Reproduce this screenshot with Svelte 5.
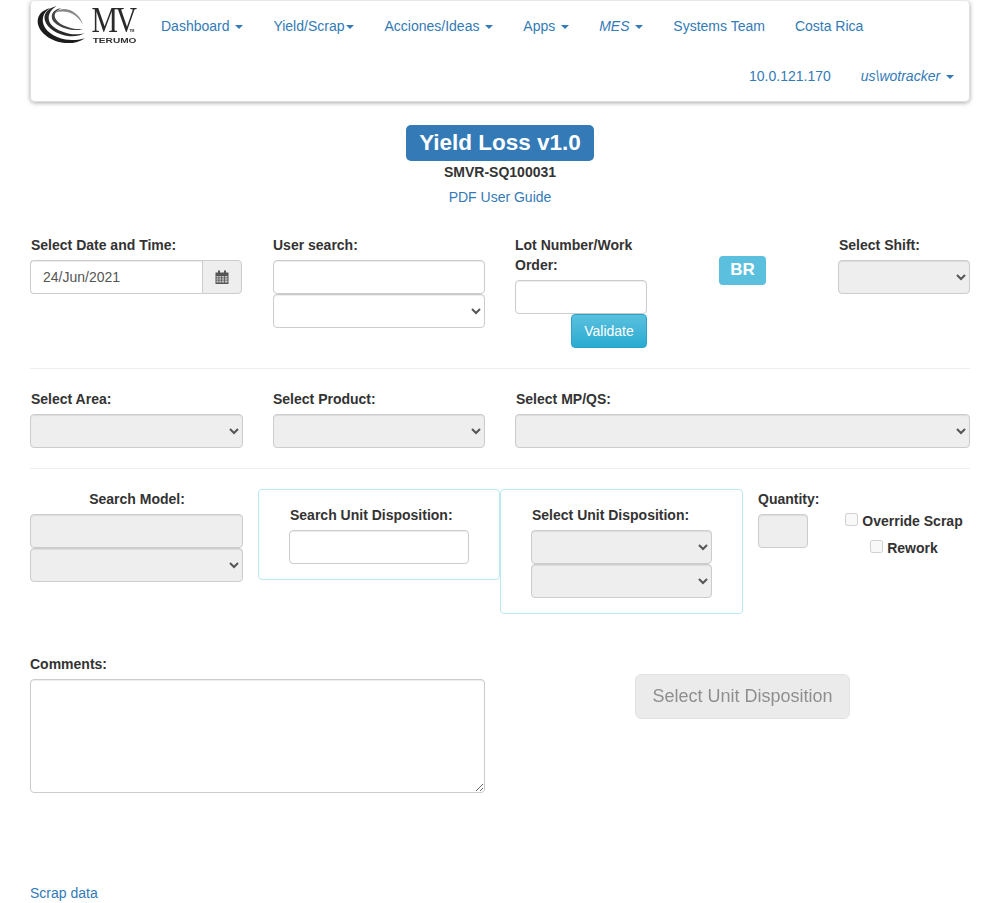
<script>
  const navLeft = [
    { label: 'Dashboard', caret: true, gap: true },
    { label: 'Yield/Scrap', caret: true, gap: false },
    { label: 'Acciones/Ideas', caret: true, gap: true },
    { label: 'Apps', caret: true, gap: true },
    { label: 'MES', caret: true, gap: true, italic: true },
    { label: 'Systems Team' },
    { label: 'Costa Rica' }
  ];
</script>

<div class="page">
  <nav class="navbar">
    <a class="brand" href="#top" aria-label="MV Terumo">
      <svg class="swirl" viewBox="0 0 50 40" width="49" height="39" aria-hidden="true">
        <path d="M14 3C4 5-1 12 1 20c2 9 14 18 28 19 8 .5 14-1 20-5-6 2-14 2.500-20 1.500C17 33 7 26 6 18 5 11 8 6 14 3z" fill="#1c1c1c"/>
        <path d="M20 1C11 3 6 9 8 16c2 8 13 15 25 16 6 .5 11-.5 16-3-5 1-11 1.500-16 .5C23 27 13 22 12 15c-1-6 3-11 8-14z" fill="#2a2a2a"/>
        <path d="M25 3c-6 1-10 4-10 9 0 6 8 11 18 13 5 1 9 1 14-.5-5 .5-10 0-14-1.500C25 21 18 16 18 11c0-3 3-6 7-8z" fill="#444"/>
        <path d="M18 8c5-5 13-5 19-1 5 3 8 7 10 13-3-5-7-9-11-11-6-3-12-3-18-1z" fill="#888"/>
      </svg>
      <span class="mark">
        <span class="mv">MV<small>TM</small></span>
        <span class="terumo">TERUMO</span>
      </span>
    </a>
    {#each navLeft as item}
      <a class="navlink" class:italic={item.italic} href="#top">{item.label}{#if item.gap}&nbsp;{/if}{#if item.caret}<span class="caret"></span>{/if}</a>
    {/each}
    <div class="navright">
      <a class="navlink" href="#top">10.0.121.170</a>
      <a class="navlink italic" href="#top">us\wotracker&nbsp;<span class="caret"></span></a>
    </div>
  </nav>

  <header class="heading">
    <span class="title">Yield Loss v1.0</span>
    <strong class="code">SMVR-SQ100031</strong>
    <a href="#top">PDF User Guide</a>
  </header>

  <section class="row first">
    <div class="col date">
      <label for="date">Select Date and Time:</label>
      <div class="group">
        <input id="date" class="ctl" value="24/Jun/2021" />
        <span class="addon">
          <svg viewBox="0 0 14 14" width="14" height="14" aria-hidden="true">
            <path d="M.5 2.500h13V14H.5z" fill="#555"/>
            <path d="M3 .5h2v3H3zM9 .5h2v3H9z" fill="#555"/>
            <path d="M1.500 6h2v1.500h-2zM4.300 6h2v1.500h-2zM7.100 6h2v1.500h-2zM9.900 6h2.600v1.500H9.900zM1.500 8.300h2v1.500h-2zM4.300 8.300h2v1.500h-2zM7.100 8.300h2v1.500h-2zM9.900 8.300h2.600v1.500H9.900zM1.500 10.600h2v1.800h-2zM4.300 10.600h2v1.800h-2zM7.100 10.600h2v1.800h-2zM9.900 10.600h2.600v1.800H9.900z" fill="#c9c9c9"/>
          </svg>
        </span>
      </div>
    </div>
    <div class="col user">
      <label for="user">User search:</label>
      <input id="user" class="ctl" />
      <select class="ctl" aria-label="User"></select>
    </div>
    <div class="col lot">
      <label for="lot">Lot Number/Work Order:</label>
      <input id="lot" class="ctl" />
      <button class="validate">Validate</button>
    </div>
    <div class="col badge-col"><span class="br">BR</span></div>
    <div class="col shift">
      <label for="shift">Select Shift:</label>
      <select id="shift" class="ctl" disabled></select>
    </div>
  </section>

  <hr />

  <section class="row second">
    <div class="col area">
      <label for="area">Select Area:</label>
      <select id="area" class="ctl" disabled></select>
    </div>
    <div class="col product">
      <label for="product">Select Product:</label>
      <select id="product" class="ctl" disabled></select>
    </div>
    <div class="col mp">
      <label for="mp">Select MP/QS:</label>
      <select id="mp" class="ctl" disabled></select>
    </div>
  </section>

  <hr class="rule-b" />

  <section class="row third">
    <div class="col model">
      <label for="model">Search Model:</label>
      <input id="model" class="ctl" disabled />
      <select class="ctl" disabled aria-label="Model"></select>
    </div>
    <div class="box search-box">
      <label for="disp">Search Unit Disposition:</label>
      <input id="disp" class="ctl" />
    </div>
    <div class="box select-box">
      <label for="seldisp">Select Unit Disposition:</label>
      <select id="seldisp" class="ctl" disabled></select>
      <select class="ctl" disabled aria-label="Disposition detail"></select>
    </div>
    <div class="col qty">
      <label for="qty">Quantity:</label>
      <input id="qty" class="ctl" disabled />
    </div>
    <div class="checks">
      <label class="check"><input type="checkbox" disabled />Override Scrap</label>
      <label class="check"><input type="checkbox" disabled />Rework</label>
    </div>
  </section>

  <section class="row fourth">
    <div class="col comments">
      <label for="comments">Comments:</label>
      <textarea id="comments" class="ctl"></textarea>
    </div>
    <div class="submit-wrap">
      <button class="submit" disabled>Select Unit Disposition</button>
    </div>
  </section>

  <a class="scrap" href="#top">Scrap data</a>
</div>

<style>
  :global(body) {
    margin: 0;
    font-family: "Liberation Sans", Arial, sans-serif;
    font-size: 14px;
    line-height: 20px;
    color: #333;
    background: #fff;
  }
  * { box-sizing: border-box; }
  a { color: #337ab7; text-decoration: none; }
  label { display: block; font-weight: 700; }

  .page { padding: 0 30px; height: 903px; overflow: hidden; }

  .navbar {
    display: flex;
    flex-wrap: wrap;
    min-height: 102px;
    align-content: flex-start;
    border: 1px solid #ddd;
    border-top-color: #e8e8e8;
    border-radius: 5px;
    box-shadow: 0 1px 4px rgba(0, 0, 0, .35);
  }
  .brand { display: flex; width: 115px; height: 50px; padding: 3px 0 0 6px; filter: blur(.3px); }
  .swirl { flex: none; margin-top: 1px; }
  .mark { display: flex; flex-direction: column; align-items: flex-end; width: 50px; color: #333; }
  .mv {
    position: relative;
    margin: 2px 2px 0 0;
    font: 400 35px/30px "Liberation Serif", serif;
    letter-spacing: -3px;
    color: #2a2a2a;
    transform: scaleX(.85);
    transform-origin: right;
  }
  .mv small { position: absolute; right: 0; bottom: 3px; font: 700 4px/4px "Liberation Sans", sans-serif; letter-spacing: 0; }
  .terumo {
    margin-top: 1px;
    font: 700 7.500px/8px "Liberation Sans", sans-serif;
    color: #333;
    transform: scaleX(1.35);
    transform-origin: right;
  }
  .navlink { display: block; padding: 15px; }
  .italic { font-style: italic; }
  .caret {
    display: inline-block;
    width: 0;
    height: 0;
    margin-left: 2px;
    vertical-align: middle;
    border-top: 4px solid;
    border-right: 4px solid transparent;
    border-left: 4px solid transparent;
  }
  .navright { display: flex; margin-left: auto; }

  .heading { display: flex; flex-direction: column; align-items: center; margin-top: 23px; }
  .title {
    padding: 0 13.500px;
    height: 36px;
    font-size: 22.500px;
    line-height: 35px;
    font-weight: 700;
    color: #fff;
    background: #337ab7;
    border-radius: 5px;
  }
  .code { margin-top: 1px; }
  .heading a { margin-top: 5px; }

  .row { display: flex; }
  .col label { padding-left: 1px; }

  .ctl {
    display: block;
    width: 100%;
    height: 34px;
    padding: 6px 12px;
    font: inherit;
    color: #555;
    background: #fff;
    border: 1px solid #ccc;
    border-radius: 4px;
    box-shadow: inset 0 1px 1px rgba(0, 0, 0, .075);
  }
  select.ctl { padding: 6px 8px; }
  .ctl:disabled { background-color: #eee; opacity: 1; }

  .first { margin-top: 28px; height: 133px; }
  .first label { margin-bottom: 5px; }
  .date { width: 212px; }
  .group { display: flex; }
  .group .ctl { border-radius: 4px 0 0 4px; border-right: 0; flex: 1; min-width: 0; }
  .addon {
    display: flex;
    align-items: center;
    justify-content: center;
    flex: none;
    width: 40px;
    background: #eee;
    border: 1px solid #ccc;
    border-radius: 0 4px 4px 0;
  }
  .user { width: 212px; margin-left: 31px; }
  .user label { padding-left: 0; }
  .lot { width: 132px; margin-left: 30px; }
  .lot label { padding-left: 0; }
  .validate {
    display: block;
    width: 76px;
    height: 34px;
    margin-left: auto;
    font: inherit;
    color: #fff;
    background: linear-gradient(#5bc0de, #2aabd2);
    border: 1px solid #28a4c9;
    border-radius: 4px;
  }
  .badge-col { width: 47px; margin-left: 72px; padding-top: 21px; }
  .br {
    display: block;
    height: 29px;
    font-size: 17px;
    font-weight: 700;
    line-height: 28px;
    text-align: center;
    color: #fff;
    background: #5bc0de;
    border-radius: 4px;
  }
  .shift { width: 132px; margin-left: 72px; }

  hr { margin: 0; border: 0; border-top: 1px solid #eee; }
  .second { margin-top: 20px; }
  .second label { margin-bottom: 5px; }
  .area { width: 213px; }
  .product { width: 212px; margin-left: 30px; }
  .product label { padding-left: 0; }
  .mp { width: 455px; margin-left: 30px; }
  .rule-b { margin-top: 20px; }

  .third { margin-top: 20px; height: 165px; }
  .third label { margin-bottom: 5px; }
  .model { width: 213px; }
  .model label { text-align: center; }
  .box { border: 1px solid #bce8f1; border-radius: 4px; }
  .search-box { width: 242px; height: 91px; margin-left: 15px; padding: 15px 30px 0; }
  .search-box label { padding-left: 1px; }
  .select-box { width: 243px; height: 125px; padding: 15px 30px 0; }
  .select-box label { padding-left: 1px; }
  .qty { width: 50px; margin-left: 15px; }
  .qty label { white-space: nowrap; padding-left: 0; }
  .checks { display: flex; flex-direction: column; align-items: center; width: 132px; margin-left: 30px; padding-top: 22px; gap: 7px; }
  .check { display: flex; align-items: center; margin: 0 !important; }
  .check input { width: 13px; height: 13px; margin: 0 4px 3px 0; }

  .fourth { align-items: flex-start; }
  .comments { width: 455px; }
  .comments label { padding-left: 0; margin-bottom: 5px; }
  textarea.ctl { height: 114px; }
  .submit-wrap { margin-left: 150px; padding-top: 20px; }
  .submit {
    display: block;
    width: 215px;
    height: 45px;
    padding: 0 0 2px;
    font: inherit;
    font-size: 18px;
    color: #333;
    background: #dbdbdb;
    border: 1px solid #ccc;
    border-radius: 6px;
    opacity: .55;
  }
  .scrap { display: block; margin-top: 90px; }
</style>
